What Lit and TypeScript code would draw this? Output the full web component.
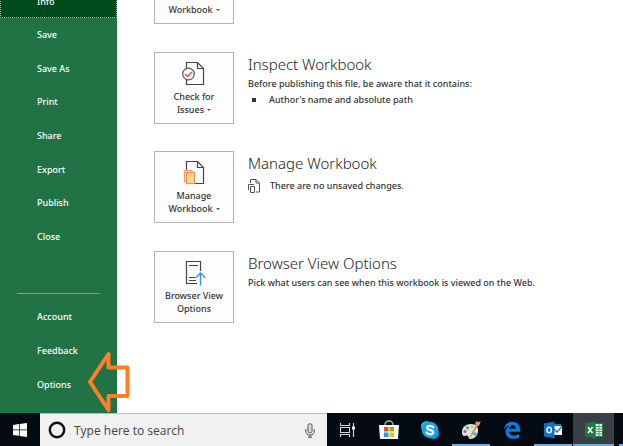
import { LitElement, html, css, TemplateResult } from "lit";
import { customElement } from "lit/decorators.js";
import { classMap } from "lit/directives/class-map.js";

const checkIcon = html`<svg class="glyph" viewBox="0 0 24 26" width="24" height="26" aria-hidden="true">
  <path d="M4.500 7V1.500h11l6 6v16h-17V19M15.500 1.500v6h6" fill="none" stroke="#444" stroke-width="1.2"/>
  <circle cx="6.500" cy="13" r="5.800" fill="#fff" stroke="#555" stroke-width="1.2"/>
  <path d="M3 13l2.500 2.500L10 11" fill="none" stroke="#e8474c" stroke-width="1.400"/>
</svg>`;

const manageIcon = html`<svg class="glyph" viewBox="0 0 24 26" width="24" height="26" aria-hidden="true">
  <path d="M4.500 10V1.500h11l6 6v16H13M15.500 1.500v6h6" fill="none" stroke="#444" stroke-width="1.2"/>
  <path d="M4 22H2.500V10.500H10V12" fill="#fbd0a8" stroke="#f2a56a" stroke-width="1.2"/>
  <rect x="4.500" y="12.500" width="8" height="11" fill="#fbdc8e" stroke="#f0954d" stroke-width="1.2"/>
</svg>`;

const browserIcon = html`<svg class="glyph" viewBox="0 0 24 26" width="24" height="26" aria-hidden="true">
  <path d="M18.500 11V1.500h-14v22H15M7 5.500h9M7 17.500h6M7 20.500h7" fill="none" stroke="#444" stroke-width="1.2"/>
  <path d="M18.500 25.500V13.500M13.500 18l5-5 5 5" fill="none" stroke="#3c96d4" stroke-width="1.400"/>
</svg>`;

const versionsIcon = html`<svg viewBox="0 0 13 14" width="13" height="14" aria-hidden="true">
  <path d="M2.500 4V.5H8L11.500 4v9H8M8 .5V4h3.500M.5 11V5.500H6" fill="none" stroke="#555"/>
  <path d="M2.500 7.500h4v6h-4z" fill="#fff" stroke="#555"/>
</svg>`;

interface Card {
  label: string[];
  menu: boolean;
  icon: TemplateResult;
  title: string;
  body: TemplateResult;
}

const cards: Card[] = [
  { label: ["", "Workbook"], menu: true, icon: html`<span class="glyph"></span>`, title: "", body: html`` },
  {
    label: ["Check for", "Issues"], menu: true, icon: checkIcon, title: "Inspect Workbook",
    body: html`<p>Before publishing this file, be aware that it contains:</p>
      <ul class="notes"><li>Author's name and absolute path</li></ul>`,
  },
  {
    label: ["Manage", "Workbook"], menu: true, icon: manageIcon, title: "Manage Workbook",
    body: html`<p class="status">${versionsIcon}<span>There are no unsaved changes.</span></p>`,
  },
  {
    label: ["Browser View", "Options"], menu: false, icon: browserIcon, title: "Browser View Options",
    body: html`<p>Pick what users can see when this workbook is viewed on the Web.</p>`,
  },
];

const apps: { name: string; open?: boolean; active?: boolean; icon: TemplateResult }[] = [
  {
    name: "Task View",
    icon: html`<svg viewBox="0 0 16 14" width="16" height="14" aria-hidden="true">
      <path d="M.5 0v2.500h9V0M.5 14v-2.500h9V14M.5 4.500h9v5h-9zM13.500 0v14" fill="none" stroke="#d5d8da" stroke-width="1.100"/>
      <path d="M12 3.500h3v3h-3z" fill="#e8eaeb"/></svg>`,
  },
  {
    name: "Store",
    icon: html`<svg viewBox="0 0 20 20" width="20" height="20" aria-hidden="true">
      <path d="M6 6V4.500a4 3.500 0 0 1 8 0V6" fill="none" stroke="#b4b7b9" stroke-width="1.300"/>
      <path d="M0 5h20l-1 14H1z" fill="#fff"/>
      <path d="M5 7h4.500v4.500H5z" fill="#f25022"/><path d="M10.500 7H15v4.500h-4.500z" fill="#7fba00"/>
      <path d="M5 12.500h4.500V17H5z" fill="#00a4ef"/><path d="M10.500 12.500H15V17h-4.500z" fill="#ffb900"/></svg>`,
  },
  {
    name: "Skype",
    icon: html`<svg viewBox="0 0 20 20" width="20" height="20" aria-hidden="true">
      <circle cx="6.500" cy="6.500" r="5.500" fill="#29b2ee"/><circle cx="13.500" cy="13.500" r="5.500" fill="#0a8fdc"/>
      <circle cx="10" cy="10" r="8.300" fill="#16a5e8"/>
      <path d="M13.300 7.200C12.500 5.600 7.200 5 7 7.700c-.1 2.700 6.300 1.700 6.200 4.600-.1 2.800-5.600 2.500-6.600.2" fill="none" stroke="#fff" stroke-width="2.200" stroke-linecap="round"/></svg>`,
  },
  {
    name: "Paint", open: true,
    icon: html`<svg viewBox="0 0 20 20" width="20" height="20" aria-hidden="true">
      <path d="M1 12C1 7 5 4 10 4c5 0 7.500 3 7 7.500-.4 4.500-4 7.500-7.500 7.500-2.500 0-1.500-3-3.200-3.500C4.500 15 4 16.500 2.500 16 1.500 15.500 1 14 1 12z" fill="#d3e6f2"/>
      <circle cx="4" cy="11.500" r="1.600" fill="#e2574c"/><circle cx="6.500" cy="7.800" r="1.600" fill="#4fb14c"/>
      <circle cx="11" cy="6.800" r="1.500" fill="#f4b731"/><circle cx="14" cy="14" r="1.800" fill="#5aa9dc"/>
      <path d="M15 5l1.500 1-4.500 8-2.500 4-.8-.5 2-4.500z" fill="#e58b35"/><path d="M14.200 2.500L16 1l1 1.200L19.500 1l-.5 3-2 2.500-2.500-1z" fill="#d9a066"/></svg>`,
  },
  {
    name: "Edge",
    icon: html`<svg viewBox="0 0 18 18" width="18" height="18" aria-hidden="true">
      <path d="M1 8.200C1.700 3.300 5 .7 9.200.7c5.200 0 8 3.600 8 8v2H6.200c.2 2.700 2.300 3.800 5 3.800 1.900 0 3.500-.5 5-1.400v3.400c-1.700.9-3.600 1.300-5.800 1.300C5.800 17.800 2.500 15.300 2.500 11c0-2.700 1.500-5 4.200-6.300C4.500 5 2.500 6.200 1 8.200zM6.400 7.700h6.300c0-2.200-1-3.400-3-3.400-1.800 0-3 1.300-3.300 3.400z" fill="#0a7bdc"/></svg>`,
  },
  {
    name: "Outlook", open: true,
    icon: html`<svg viewBox="0 0 20 18" width="20" height="18" aria-hidden="true">
      <path d="M10 3h8v3h-8z" fill="#1477cc"/><path d="M10 5h9v9h-9z" fill="#fff"/>
      <path d="M11 8l3 3 5-5.500" fill="none" stroke="#1477cc" stroke-width="1.300"/>
      <path d="M1 2.500L11.500.5v17L1 15.500z" fill="#0f6fc6"/>
      <ellipse cx="6.200" cy="9" rx="2.200" ry="2.800" fill="none" stroke="#fff" stroke-width="1.500"/></svg>`,
  },
  {
    name: "Excel", open: true, active: true,
    icon: html`<svg viewBox="0 0 20 18" width="20" height="18" aria-hidden="true">
      <path d="M11 2.500h7.500v13H11z" fill="#e9f3ec" stroke="#1f8048"/><path d="M12 5.500h6M12 8h6M12 10.500h6M12 13h6M15 3v12" stroke="#4b9a69" stroke-width=".9"/>
      <path d="M1 2.500L11.500.5v17L1 15.500z" fill="#1b7a43"/>
      <path d="M4 6l4.500 6M8.500 6L4 12" stroke="#fff" stroke-width="1.500"/></svg>`,
  },
];

@customElement("app-root")
export class AppRoot extends LitElement {
  static styles = css`
    :host { display: block; font-family: "Noto Sans", "Open Sans", sans-serif; color: #333; }
    * { box-sizing: border-box; }
    button { font: inherit; color: inherit; border: 0; padding: 0; background: none; }
    ul { list-style: none; margin: 0; padding: 0; }
    p, h2 { margin: 0; }
    .shell { height: 100vh; display: flex; flex-direction: column; background: #fff; overflow: hidden; font-size: 9px; font-weight: 500; }
    .backstage { flex: 1; min-height: 0; display: flex; }

    .side { position: relative; flex: none; width: 117px; display: flex; flex-direction: column; justify-content: flex-end;
      padding-bottom: 12px; background: #217346; color: #fff; }
    .nav { flex: none; display: grid; grid-auto-rows: 1fr; }
    .files { height: 235px; }
    .more { height: 101px; }
    .current { height: 34px; }
    .link { display: flex; align-items: center; padding-left: 37px; height: 100%; color: #fff; text-decoration: none; }
    .current .link { background: #004b1c; border: 1px dotted #9dbfa8; padding-left: 36px; }
    .rule { flex: none; align-self: stretch; margin: 40px 17px 6px; border: 0; border-top: 1px solid #6fa886; }
    .arrow { position: absolute; left: 87px; bottom: 0; }

    .info { flex: 1; min-width: 0; display: flex; flex-direction: column; justify-content: flex-end; padding: 0 16px 90px 37px; }
    .cards { flex: none; height: 371px; display: flex; flex-direction: column; justify-content: space-between; }
    .card { display: flex; gap: 14px; }
    .tile { flex: none; width: 80px; height: 72px; display: flex; flex-direction: column; align-items: center;
      padding-top: 8px; border: 1px solid #b4b4b4; background: #fdfdfd; line-height: 13px; }
    .tile-line { min-height: 13px; }
    .glyph { flex: none; display: block; width: 24px; height: 26px; margin-bottom: 3px; }
    .caret { display: inline-block; margin-left: 3px; vertical-align: 2px; border: 2px solid transparent; border-top-color: #555; border-bottom: 0; }
    .text { line-height: 16px; }
    .title { font-weight: 300; font-size: 15px; line-height: 24px; color: #222; }
    .notes li { display: flex; align-items: center; gap: 13px; padding-left: 4px; }
    .notes li::before { content: ""; width: 4px; height: 4px; background: #333; }
    .status { display: flex; align-items: center; gap: 9px; padding-top: 3px; }

    .taskbar { flex: none; height: 33px; display: flex; background: #050b13; }
    .start { width: 40px; display: grid; place-items: center; }
    .search { flex: 1; display: flex; align-items: center; gap: 8px; padding: 0 12px 0 8px; background: #f1f1f1; border-top: 1px solid #bdbdbd; }
    .query { flex: 1; min-width: 0; border: 0; padding: 0; background: none; font: 12px "Open Sans", "Noto Sans", sans-serif; }
    .query::placeholder { color: #444; opacity: 1; }
    .apps { flex: none; display: flex; }
    .app { width: 41px; display: grid; place-items: center; border-bottom: 2px solid transparent; padding-top: 2px; }
    .open { border-image: linear-gradient(90deg, transparent 4px, #6fabdc 4px, #6fabdc 38px, transparent 38px) 2; }
    .active { background: #3a3f45; border-image: none; border-bottom-color: #6fabdc; }
    .edge { width: 9px; padding: 31px 0 0 5px; }
    .edge::before { content: ""; display: block; height: 2px; background: #6fabdc; }
  `;

  private links(names: string[], kind: string) {
    return html`<ul class="nav ${kind}">${names.map((n) => html`<li><a class="link" href="#">${n}</a></li>`)}</ul>`;
  }

  private card(c: Card) {
    return html`<section class="card">
      <button class="tile">${c.icon}<span class="tile-line">${c.label[0]}</span><span class="tile-line">${c.label[1]}${c.menu ? html`<i class="caret"></i>` : ""}</span></button>
      <div class="text">${c.title ? html`<h2 class="title">${c.title}</h2>` : ""}${c.body}</div>
    </section>`;
  }

  render() {
    return html`<div class="shell">
      <div class="backstage">
        <nav class="side">
          ${this.links(["Info"], "current")}
          ${this.links(["Save", "Save As", "Print", "Share", "Export", "Publish", "Close"], "files")}
          <hr class="rule" />
          ${this.links(["Account", "Feedback", "Options"], "more")}
          <svg class="arrow" viewBox="0 0 44 62" width="44" height="62" aria-hidden="true">
            <path d="M3 31L21.500 3V16.500H40.500V45H21.500V59z" fill="none" stroke="#ff7f27" stroke-width="4" stroke-linejoin="round"/>
          </svg>
        </nav>
        <main class="info"><div class="cards">${cards.map((c) => this.card(c))}</div></main>
      </div>
      <footer class="taskbar">
        <button class="start" aria-label="Start">
          <svg viewBox="0 0 14 14" width="14" height="14" aria-hidden="true">
            <path d="M0 2l6-.9v5.500H0zM6.700 1L14 0v6.600H6.700zM0 7.300h6v5.500L0 12zM6.700 7.300H14V14l-7.300-1z" fill="#fff"/></svg>
        </button>
        <label class="search">
          <svg viewBox="0 0 18 18" width="18" height="18" aria-hidden="true"><circle cx="9" cy="9" r="7.200" fill="none" stroke="#111" stroke-width="2.400"/></svg>
          <input class="query" type="text" placeholder="Type here to search" aria-label="Search" />
          <svg viewBox="0 0 10 15" width="10" height="15" aria-hidden="true">
            <rect x="3" y=".8" width="4" height="9" rx="1.500" fill="#ddd" stroke="#555"/>
            <path d="M.8 6v3.500L3 12h4l2.200-2.500V6M5 12v2.500M3 14.300h4" fill="none" stroke="#555"/></svg>
        </label>
        <div class="apps">
          ${apps.map((a) => html`<button class=${classMap({ app: true, open: !!a.open, active: !!a.active })} aria-label=${a.name}>${a.icon}</button>`)}
          <div class="edge"></div>
        </div>
      </footer>
    </div>`;
  }
}
